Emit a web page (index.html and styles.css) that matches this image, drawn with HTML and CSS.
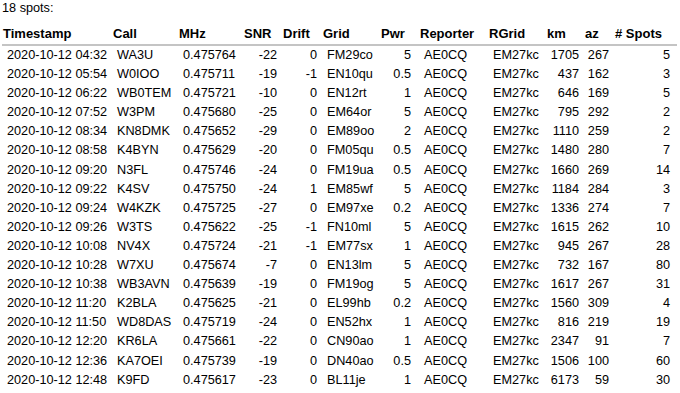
FILE: index.html
```html
<!DOCTYPE html>
<html>
<head>
    <title>Spots</title>
    <link rel="stylesheet" href="styles.css">
</head>
<body>
    <div class="count">18 spots:</div>
    <table class="spots">
        <colgroup>
            <col class="c-time"><col class="c-call"><col class="c-mhz"><col class="c-snr">
            <col class="c-drift"><col class="c-grid"><col class="c-pwr"><col class="c-rep">
            <col class="c-rgrid"><col class="c-km"><col class="c-az"><col class="c-nspots">
        </colgroup>
        <thead>
            <tr>
                <th>Timestamp</th><th>Call</th><th>MHz</th><th>SNR</th><th>Drift</th><th>Grid</th>
                <th>Pwr</th><th>Reporter</th><th>RGrid</th><th>km</th><th>az</th><th># Spots</th>
            </tr>
        </thead>
        <tbody>
            <tr><td>2020-10-12 04:32</td><td>WA3U</td><td>0.475764</td><td>-22</td><td>0</td><td>FM29co</td><td>5</td><td>AE0CQ</td><td>EM27kc</td><td>1705</td><td>267</td><td>5</td></tr>
            <tr><td>2020-10-12 05:54</td><td>W0IOO</td><td>0.475711</td><td>-19</td><td>-1</td><td>EN10qu</td><td>0.5</td><td>AE0CQ</td><td>EM27kc</td><td>437</td><td>162</td><td>3</td></tr>
            <tr><td>2020-10-12 06:22</td><td>WB0TEM</td><td>0.475721</td><td>-10</td><td>0</td><td>EN12rt</td><td>1</td><td>AE0CQ</td><td>EM27kc</td><td>646</td><td>169</td><td>5</td></tr>
            <tr><td>2020-10-12 07:52</td><td>W3PM</td><td>0.475680</td><td>-25</td><td>0</td><td>EM64or</td><td>5</td><td>AE0CQ</td><td>EM27kc</td><td>795</td><td>292</td><td>2</td></tr>
            <tr><td>2020-10-12 08:34</td><td>KN8DMK</td><td>0.475652</td><td>-29</td><td>0</td><td>EM89oo</td><td>2</td><td>AE0CQ</td><td>EM27kc</td><td>1110</td><td>259</td><td>2</td></tr>
            <tr><td>2020-10-12 08:58</td><td>K4BYN</td><td>0.475629</td><td>-20</td><td>0</td><td>FM05qu</td><td>0.5</td><td>AE0CQ</td><td>EM27kc</td><td>1480</td><td>280</td><td>7</td></tr>
            <tr><td>2020-10-12 09:20</td><td>N3FL</td><td>0.475746</td><td>-24</td><td>0</td><td>FM19ua</td><td>0.5</td><td>AE0CQ</td><td>EM27kc</td><td>1660</td><td>269</td><td>14</td></tr>
            <tr><td>2020-10-12 09:22</td><td>K4SV</td><td>0.475750</td><td>-24</td><td>1</td><td>EM85wf</td><td>5</td><td>AE0CQ</td><td>EM27kc</td><td>1184</td><td>284</td><td>3</td></tr>
            <tr><td>2020-10-12 09:24</td><td>W4KZK</td><td>0.475725</td><td>-27</td><td>0</td><td>EM97xe</td><td>0.2</td><td>AE0CQ</td><td>EM27kc</td><td>1336</td><td>274</td><td>7</td></tr>
            <tr><td>2020-10-12 09:26</td><td>W3TS</td><td>0.475622</td><td>-25</td><td>-1</td><td>FN10ml</td><td>5</td><td>AE0CQ</td><td>EM27kc</td><td>1615</td><td>262</td><td>10</td></tr>
            <tr><td>2020-10-12 10:08</td><td>NV4X</td><td>0.475724</td><td>-21</td><td>-1</td><td>EM77sx</td><td>1</td><td>AE0CQ</td><td>EM27kc</td><td>945</td><td>267</td><td>28</td></tr>
            <tr><td>2020-10-12 10:28</td><td>W7XU</td><td>0.475674</td><td>-7</td><td>0</td><td>EN13lm</td><td>5</td><td>AE0CQ</td><td>EM27kc</td><td>732</td><td>167</td><td>80</td></tr>
            <tr><td>2020-10-12 10:38</td><td>WB3AVN</td><td>0.475639</td><td>-19</td><td>0</td><td>FM19og</td><td>5</td><td>AE0CQ</td><td>EM27kc</td><td>1617</td><td>267</td><td>31</td></tr>
            <tr><td>2020-10-12 11:20</td><td>K2BLA</td><td>0.475625</td><td>-21</td><td>0</td><td>EL99hb</td><td>0.2</td><td>AE0CQ</td><td>EM27kc</td><td>1560</td><td>309</td><td>4</td></tr>
            <tr><td>2020-10-12 11:50</td><td>WD8DAS</td><td>0.475719</td><td>-24</td><td>0</td><td>EN52hx</td><td>1</td><td>AE0CQ</td><td>EM27kc</td><td>816</td><td>219</td><td>19</td></tr>
            <tr><td>2020-10-12 12:20</td><td>KR6LA</td><td>0.475661</td><td>-22</td><td>0</td><td>CN90ao</td><td>1</td><td>AE0CQ</td><td>EM27kc</td><td>2347</td><td>91</td><td>7</td></tr>
            <tr><td>2020-10-12 12:36</td><td>KA7OEI</td><td>0.475739</td><td>-19</td><td>0</td><td>DN40ao</td><td>0.5</td><td>AE0CQ</td><td>EM27kc</td><td>1506</td><td>100</td><td>60</td></tr>
            <tr><td>2020-10-12 12:48</td><td>K9FD</td><td>0.475617</td><td>-23</td><td>0</td><td>BL11je</td><td>1</td><td>AE0CQ</td><td>EM27kc</td><td>6173</td><td>59</td><td>30</td></tr>
        </tbody>
    </table>
</body>
</html>
```

FILE: styles.css
```css
body {
    font-family: "Liberation Sans", Arial, sans-serif;
    font-size: 13px;
    color: #000;
    background-color: #fff;
    margin: 0;
    padding: 0 2px;
}
.count {
    padding-top: 1px;
    line-height: 15px;
    font-size: 12.7px;
}
.spots {
    margin-top: 7px;
    border-collapse: collapse;
    table-layout: fixed;
    width: 675px;
}
.spots th {
    font-weight: bold;
    text-align: left;
    line-height: 15px;
    padding: 3px 0 3px 1px;
    border-bottom: 2px solid #c4c4c4;
    white-space: nowrap;
}
.spots td {
    font-size: 12.7px;
    line-height: 15.1px;
    padding: 2px 0 2px 5px;
    white-space: nowrap;
}
/* numeric columns: SNR, Drift, Pwr, km, az, # Spots */
.spots td:nth-child(4),
.spots td:nth-child(5),
.spots td:nth-child(7),
.spots td:nth-child(10),
.spots td:nth-child(11),
.spots td:nth-child(12) {
    text-align: right;
    padding-left: 0;
    padding-right: 5px;
}
.spots td:nth-child(7) {
    padding-right: 8px;
}
.spots td:nth-child(12) {
    padding-right: 7px;
}
.c-time { width: 110px; }
.c-call { width: 66px; }
.c-mhz { width: 65px; }
.c-snr { width: 39px; }
.c-drift { width: 40px; }
.c-grid { width: 58px; }
.c-pwr { width: 39px; }
.c-rep { width: 69px; }
.c-rgrid { width: 58px; }
.c-km { width: 38px; }
.c-az { width: 30px; }
.c-nspots { width: 63px; }
```
